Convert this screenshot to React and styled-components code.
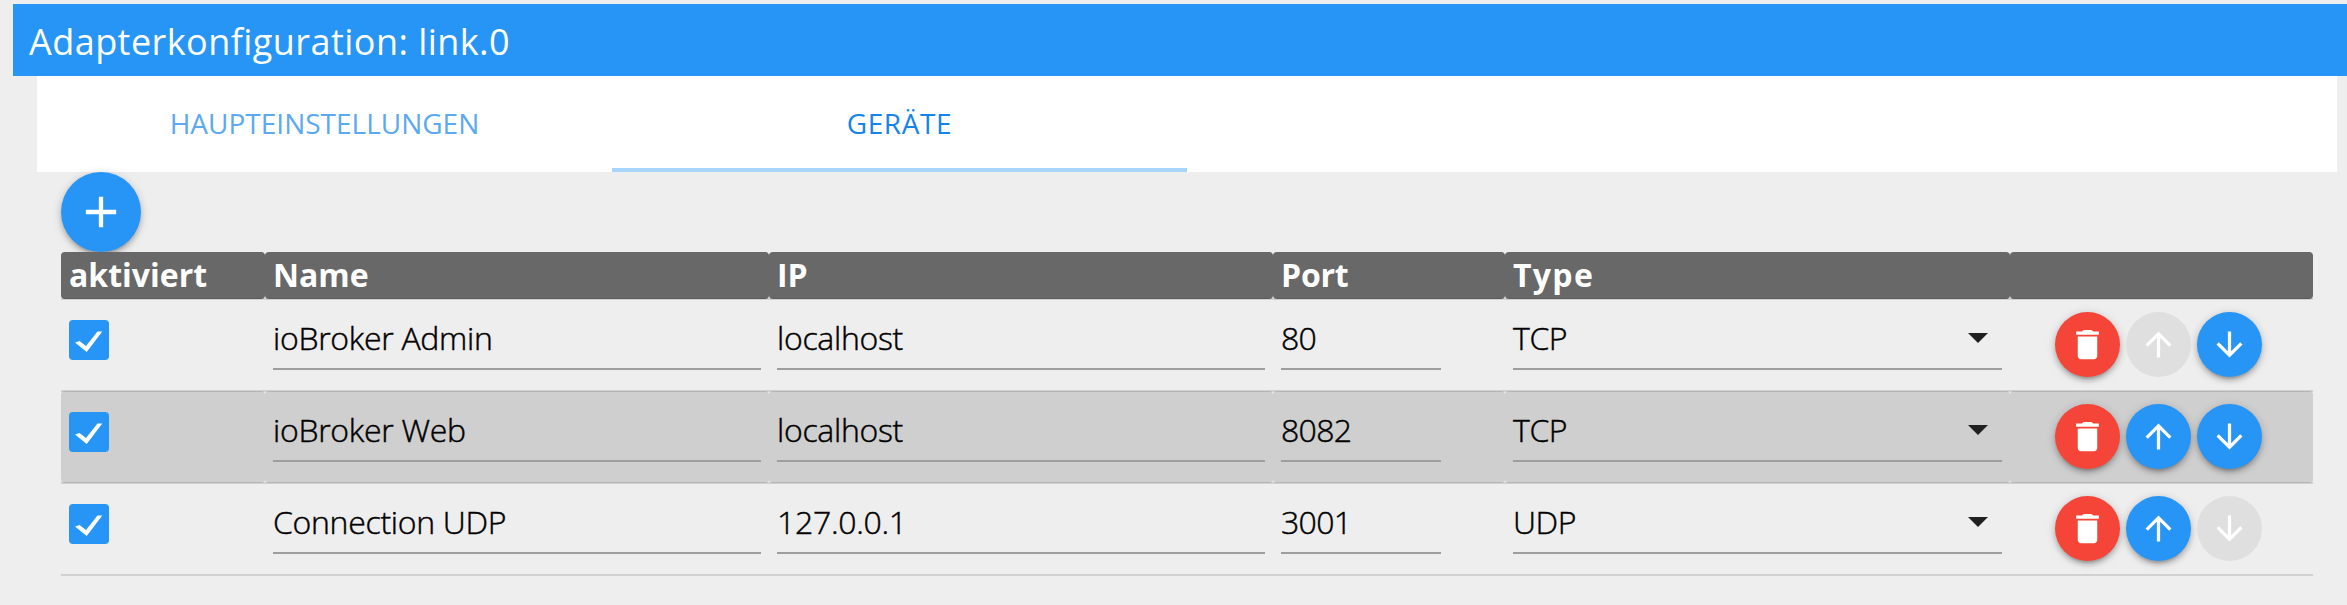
import React, { useState } from "react";
import styled, { createGlobalStyle } from "styled-components";

const Global = createGlobalStyle`
  *, *::before, *::after { box-sizing: border-box; }
  body { margin: 0; background: #eee; color: #000; font-family: "Open Sans", "Noto Sans", sans-serif; }
`;
const Page = styled.div`
  min-height: 605px;
  padding-top: 4px;
  overflow: hidden;
`;
const TitleBar = styled.header`
  height: 72px;
  margin-left: 13px;
  padding-left: 16px;
  background: #2795f5;
  color: #fff;
  font-size: 36px;
  line-height: 75px;
  white-space: nowrap;
  letter-spacing: 0.45px;
`;
const TabBar = styled.nav`
  display: flex;
  height: 96px;
  margin: 0 10px 0 37px;
  background: #fff;
`;
const Tab = styled.button`
  width: 575px;
  height: 96px;
  padding: 0;
  border: 0;
  border-bottom: 4px solid ${(p) => (p.$active ? "#a8d5fb" : "transparent")};
  background: none;
  color: ${(p) => (p.$active ? "#1584ea" : "#5ba9ef")};
  font: 400 28px/94px "Open Sans", sans-serif;
  letter-spacing: ${(p) => (p.$active ? "0.6px" : "0")};
  text-transform: uppercase;
`;
const Panel = styled.main`
  padding: 0 34px 0 61px;
`;
const RoundButton = styled.button`
  display: flex;
  align-items: center;
  justify-content: center;
  flex: none;
  width: ${(p) => p.$size}px;
  height: ${(p) => p.$size}px;
  padding: 0 0 1px;
  border: 0;
  border-radius: 50%;
  color: #fff;
  background: ${(p) => (p.disabled ? "#dfdfdf" : p.$danger ? "#f44538" : "#2795f5")};
  box-shadow: ${(p) => (p.disabled ? "none" : "0 4px 4px 0 rgba(0,0,0,.14), 0 6px 2px -4px rgba(0,0,0,.12), 0 2px 10px 0 rgba(0,0,0,.2)")};
`;
const Icon = styled.svg`
  display: block;
  width: ${(p) => p.$size}px;
  height: ${(p) => p.$size}px;
  fill: currentColor;
`;
const Table = styled.table`
  width: 2252px;
  table-layout: fixed;
  border-collapse: collapse;
`;
const Column = styled.col`
  width: ${(p) => p.$width}px;
`;
const HeadRow = styled.tr`
  border-bottom: 2px solid rgba(0, 0, 0, 0.12);
`;
const HeadCell = styled.th`
  height: 47px;
  padding: 0 8px;
  border-radius: 4px;
  background: #686868;
  color: #fff;
  font-size: 32px;
  line-height: 44px;
  font-weight: 700;
  letter-spacing: ${(p) => p.$tracking}px;
  text-align: left;
`;
const Row = styled.tr`
  border-bottom: 2px solid rgba(0, 0, 0, 0.12);
`;
const Cell = styled.td`
  height: 92px;
  padding: 0 8px;
  border-radius: 4px;
  background: ${(p) => (p.$shaded ? "#cfcfcf" : "transparent")};
  vertical-align: top;
`;
const CheckBox = styled.button`
  display: block;
  width: 40px;
  height: 40px;
  margin-top: 20px;
  padding: 0;
  border: 0;
  border-radius: 4px;
  background: #2795f5;
  color: #fff;
`;
const Field = styled.div`
  display: flex;
  justify-content: space-between;
  width: ${(p) => (p.$width ? p.$width + "px" : "auto")};
  height: 62px;
  margin-top: 8px;
  border-bottom: 2px solid #9e9e9e;
  font-size: 32px;
  line-height: 60px;
  font-weight: 300;
  letter-spacing: ${(p) => p.$tracking}px;
  -webkit-text-stroke: 0.45px currentColor;
  white-space: nowrap;
`;
const Caret = styled.svg`
  width: 20px;
  height: 10px;
  margin: 25px 14px 0 0;
  fill: #202020;
`;
const Actions = styled.div`
  display: flex;
  gap: 6px;
  padding: 12px 0 0 37px;
`;

const icons = {
  add: "M19 13h-6v6h-2v-6H5v-2h6V5h2v6h6v2z",
  trash: "M6 19c0 1.1.9 2 2 2h8c1.1 0 2-.9 2-2V7H6v12zM19 4h-3.5l-1-1h-5l-1 1H5v2h14V4z",
  up: "M4 12l1.41 1.41L11 7.83V20h2V7.83l5.58 5.59L20 12l-8-8-8 8z",
  down: "M20 12l-1.41-1.41L13 16.17V4h-2v12.17l-5.58-5.59L4 12l8 8 8-8z",
};
const columns = [
  { title: "aktiviert", width: 204, tracking: 0 },
  { title: "Name", width: 504, tracking: 0 },
  { title: "IP", width: 504, tracking: 0 },
  { title: "Port", width: 232, tracking: -0.2 },
  { title: "Type", width: 505, tracking: 1.3 },
  { title: "", width: 303, tracking: 0 },
];
const devices = [
  { name: "ioBroker Admin", ip: "localhost", port: "80", type: "TCP" },
  { name: "ioBroker Web", ip: "localhost", port: "8082", type: "TCP" },
  { name: "Connection UDP", ip: "127.0.0.1", port: "3001", type: "UDP" },
];

function IconButton({ icon, size = 65, iconSize = 39, danger, disabled, label }) {
  return (
    <RoundButton $size={size} $danger={danger} disabled={disabled} aria-label={label}>
      <Icon $size={iconSize} viewBox="0 0 24 24"><path d={icons[icon]} /></Icon>
    </RoundButton>
  );
}

function Toggle() {
  const [on, setOn] = useState(true);
  return (
    <CheckBox role="checkbox" aria-checked={on} onClick={() => setOn(!on)}>
      {on && <Icon $size={40} viewBox="0 0 40 40"><path d="M6 22.5L10.5 21L17 26L28.5 11.5L33.3 11.5L17.7 32Z" /></Icon>}
    </CheckBox>
  );
}

function DeviceRow({ device, shaded, first, last }) {
  return (
    <Row>
      <Cell $shaded={shaded}><Toggle /></Cell>
      <Cell $shaded={shaded}><Field $tracking={-0.3}>{device.name}</Field></Cell>
      <Cell $shaded={shaded}><Field $tracking={-0.3}>{device.ip}</Field></Cell>
      <Cell $shaded={shaded}><Field $width={160} $tracking={-0.7}>{device.port}</Field></Cell>
      <Cell $shaded={shaded}>
        <Field $tracking={-0.4}>{device.type}<Caret viewBox="0 0 20 10"><path d="M0 0h20L10 10z" /></Caret></Field>
      </Cell>
      <Cell $shaded={shaded}>
        <Actions>
          <IconButton icon="trash" danger label="Löschen" />
          <IconButton icon="up" disabled={first} label="Nach oben" />
          <IconButton icon="down" disabled={last} label="Nach unten" />
        </Actions>
      </Cell>
    </Row>
  );
}

export default function App() {
  return (
    <Page>
      <Global />
      <TitleBar>Adapterkonfiguration: link.0</TitleBar>
      <TabBar>
        <Tab>Haupteinstellungen</Tab>
        <Tab $active>Geräte</Tab>
      </TabBar>
      <Panel>
        <IconButton icon="add" size={80} iconSize={52} label="Hinzufügen" />
        <Table>
          <colgroup>{columns.map((c) => <Column key={c.title} $width={c.width} />)}</colgroup>
          <thead>
            <HeadRow>{columns.map((c) => <HeadCell key={c.title} $tracking={c.tracking}>{c.title}</HeadCell>)}</HeadRow>
          </thead>
          <tbody>
            {devices.map((d, i) => (
              <DeviceRow key={d.name} device={d} shaded={i % 2 === 1} first={i === 0} last={i === devices.length - 1} />
            ))}
          </tbody>
        </Table>
      </Panel>
    </Page>
  );
}
